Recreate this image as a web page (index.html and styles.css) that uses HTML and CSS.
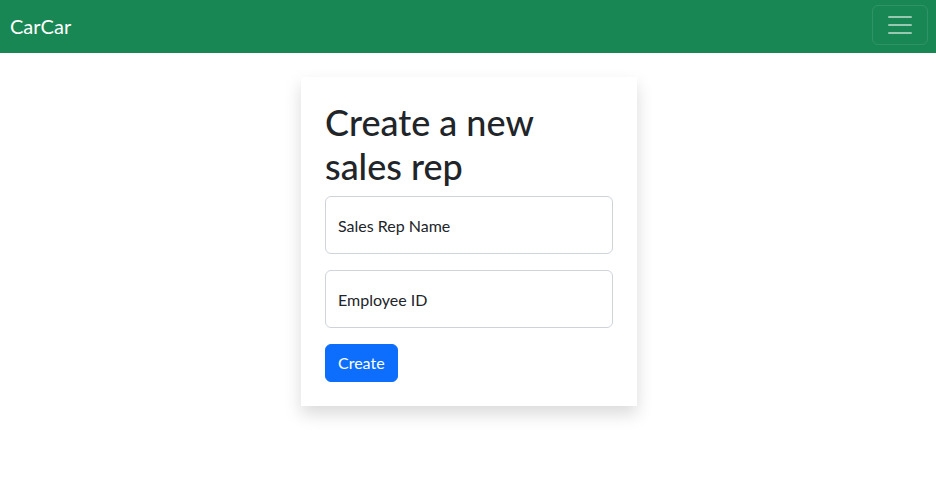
FILE: index.html
```html
<!DOCTYPE html>
<html lang="en">
<head>
<meta charset="utf-8">
<title>CarCar</title>
<link rel="stylesheet" href="styles.css">
</head>
<body>
<nav class="navbar">
  <a class="brand" href="#">CarCar</a>
  <button class="toggler" type="button" aria-label="Toggle navigation">
    <svg class="toggler-icon" width="30" height="30" viewBox="0 0 30 30"><path stroke="rgba(255,255,255,0.55)" stroke-linecap="round" stroke-miterlimit="10" stroke-width="2" d="M4 7h22M4 15h22M4 23h22"/></svg>
  </button>
</nav>
<main class="container">
  <div class="card">
    <h1 class="title">Create a new sales rep</h1>
    <form class="form">
      <div class="field"><input type="text" placeholder="Sales Rep Name"></div>
      <div class="field"><input type="text" placeholder="Employee ID"></div>
      <button class="btn" type="button">Create</button>
    </form>
  </div>
</main>
</body>
</html>
```
FILE: styles.css
```css
* { box-sizing: border-box; }
html, body { margin: 0; padding: 0; }
body {
  font-family: "Lato", "Noto Sans", sans-serif;
  color: #212529;
  background: #fff;
  font-size: 16px;
  line-height: 1.5;
  min-height: 100vh;
}
.navbar {
  height: 53px;
  background: #198754;
  display: flex;
  align-items: flex-start;
  justify-content: space-between;
  padding: 5px 8px 0 10px;
}
.brand {
  color: #fff;
  text-decoration: none;
  font-size: 20px;
  line-height: 30px;
  margin-top: 6px;
}
.toggler {
  width: 56px;
  height: 40px;
  padding: 0;
  display: flex;
  align-items: center;
  justify-content: center;
  background: transparent;
  border: 1px solid rgba(255,255,255,0.1);
  border-radius: 6px;
}
.container {
  display: flex;
  justify-content: center;
  padding: 24px 0 40px 2px;
}
.card {
  width: 336px;
  padding: 24px;
  background: #fff;
  box-shadow: 0 8px 16px rgba(0,0,0,0.15);
}
.title {
  margin: 0 0 8px;
  font-size: 36px;
  font-weight: 500;
  line-height: 43.5px;
}
.form { display: flex; flex-direction: column; align-items: flex-start; }
.field { width: 100%; margin-bottom: 16px; }
.field input {
  width: 100%;
  height: 58px;
  padding: 16px 12px;
  border: 1px solid #ced4da;
  border-radius: 6px;
  font: inherit;
  color: #212529;
}
.field input::placeholder { color: #212529; }
.btn {
  font: inherit;
  color: #fff;
  background: #0d6efd;
  border: 1px solid #0d6efd;
  border-radius: 6px;
  padding: 6px 12px;
  line-height: 24px;
}
```
